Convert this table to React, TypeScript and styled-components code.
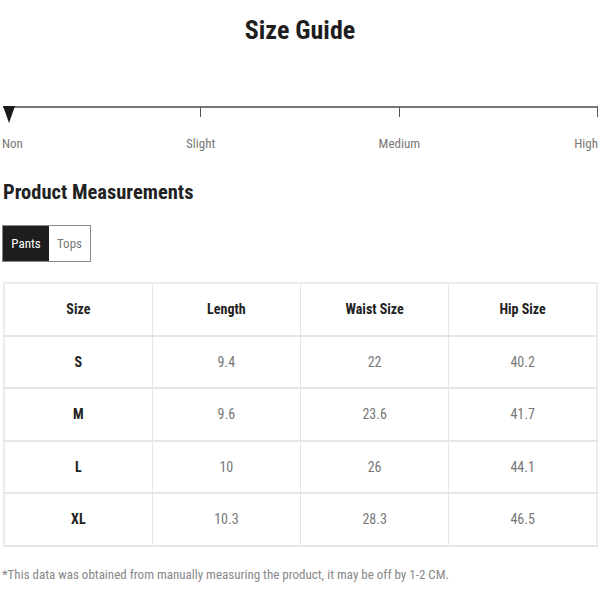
import React from "react";
import styled, { createGlobalStyle } from "styled-components";

const GlobalStyle = createGlobalStyle`
  html, body {
    margin: 0;
    padding: 0;
    background: #ffffff;
  }
  body {
    font-family: "Roboto Condensed", "Liberation Sans", Arial, sans-serif;
    color: #222;
  }
`;

const Page = styled.div`
  width: 600px;
  height: 600px;
  box-sizing: border-box;
  padding: 0 2px 0 2px;
  display: flex;
  flex-direction: column;
  overflow: hidden;
`;

const Title = styled.h1`
  margin: 14px 0 0 0;
  height: 32px;
  line-height: 32px;
  text-align: center;
  font-size: 26px;
  font-weight: 700;
  color: #1e1e1e;
`;

const Scale = styled.div`
  position: relative;
  margin: 60px 0 0 1px;
  display: grid;
  grid-template-columns: repeat(3, 1fr);
`;

const Segment = styled.div`
  height: 9px;
  border-top: 2px solid #777;
  border-right: 1px solid #555;
`;

const Marker = styled.div`
  position: absolute;
  left: 0;
  top: 0;
  width: 0;
  height: 0;
  border-left: 6px solid transparent;
  border-right: 6px solid transparent;
  border-top: 17px solid #1a1a1a;
`;

const Labels = styled.div`
  margin-top: 18px;
  display: grid;
  grid-template-columns: repeat(6, 1fr);
  font-size: 13px;
  color: #777;
  line-height: 18px;
`;

const Label = styled.div<{ $align: "left" | "center" | "right"; $span: number }>`
  grid-column: span ${(p) => p.$span};
  text-align: ${(p) => p.$align};
`;

const SectionTitle = styled.h2`
  margin: 25px 0 0 1px;
  font-size: 20.5px;
  line-height: 28px;
  font-weight: 700;
  color: #222;
`;

const Tabs = styled.div`
  margin-top: 19px;
  display: flex;
  align-self: flex-start;
  border: 1px solid #888;
`;

const Tab = styled.button<{ $active?: boolean; $w: number }>`
  width: ${(p) => p.$w}px;
  height: 35px;
  padding: 0;
  border: none;
  font-family: inherit;
  font-size: 13px;
  background: ${(p) => (p.$active ? "#1e1e1e" : "#fff")};
  color: ${(p) => (p.$active ? "#fff" : "#777")};
`;

const Table = styled.table`
  margin: 20px 0 0 1px;
  width: 595px;
  border-collapse: collapse;
  table-layout: fixed;
  border: 2px solid #ececec;
`;

const Th = styled.th`
  height: 50.5px;
  border: 1px solid #e6e6e6;
  border-bottom-width: 2px;
  font-size: 14px;
  font-weight: 700;
  color: #222;
  text-align: center;
  vertical-align: middle;
  padding: 0;
`;

const Td = styled.td<{ $bold?: boolean }>`
  height: 50.5px;
  border: 1px solid #e6e6e6;
  border-bottom-width: 2px;
  font-size: 14px;
  font-weight: ${(p) => (p.$bold ? 700 : 400)};
  color: ${(p) => (p.$bold ? "#222" : "#777")};
  text-align: center;
  vertical-align: middle;
  padding: 0;
`;

const Note = styled.p`
  margin: 19px 0 0 0;
  font-size: 13px;
  line-height: 18px;
  color: #888;
`;

const rows = [
  ["S", "9.4", "22", "40.2"],
  ["M", "9.6", "23.6", "41.7"],
  ["L", "10", "26", "44.1"],
  ["XL", "10.3", "28.3", "46.5"],
];

export default function App() {
  return (
    <>
      <GlobalStyle />
      <Page>
        <Title>Size Guide</Title>
        <Scale>
          <Segment />
          <Segment />
          <Segment />
          <Marker />
        </Scale>
        <Labels>
          <Label $align="left" $span={1}>Non</Label>
          <Label $align="center" $span={2}>Slight</Label>
          <Label $align="center" $span={2}>Medium</Label>
          <Label $align="right" $span={1}>High</Label>
        </Labels>
        <SectionTitle>Product Measurements</SectionTitle>
        <Tabs>
          <Tab $active $w={46}>Pants</Tab>
          <Tab $w={41}>Tops</Tab>
        </Tabs>
        <Table>
          <thead>
            <tr>
              <Th>Size</Th>
              <Th>Length</Th>
              <Th>Waist Size</Th>
              <Th>Hip Size</Th>
            </tr>
          </thead>
          <tbody>
            {rows.map((r) => (
              <tr key={r[0]}>
                <Td $bold>{r[0]}</Td>
                <Td>{r[1]}</Td>
                <Td>{r[2]}</Td>
                <Td>{r[3]}</Td>
              </tr>
            ))}
          </tbody>
        </Table>
        <Note>*This data was obtained from manually measuring the product, it may be off by 1-2 CM.</Note>
      </Page>
    </>
  );
}
